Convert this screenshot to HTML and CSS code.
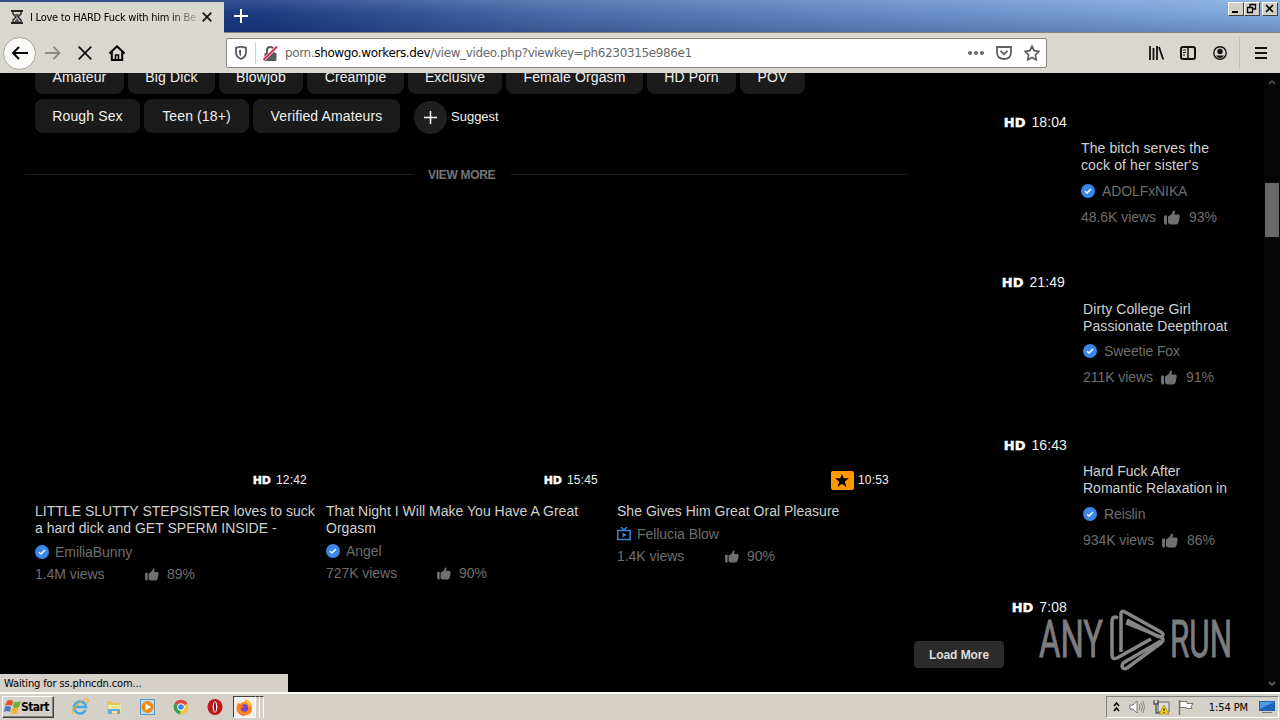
FILE: index.html
```html
<!DOCTYPE html>
<html lang="en">
<head>
<meta charset="utf-8">
<title>Browser window</title>
<link rel="stylesheet" href="styles.css">
</head>
<body>
<svg class="defs" width="0" height="0">
  <symbol id="thumb" viewBox="0 0 16 15"><path d="M0 6.500Q0 5.500 1 5.500H3v9H1.200Q0 14 0 12zM4 6.500 8 3.800 9 .8Q10.500 0 11 1.500L10.500 4.500H14.500Q16 5 15.700 7L14.500 12.500Q14 14.500 12 14.500H6L4 13z"/></symbol>
  <symbol id="check" viewBox="0 0 14 14"><circle cx="7" cy="7" r="7" fill="#3b86e8"/><path d="M4 7.300 6 9l4-4" fill="none" stroke="#fff" stroke-width="1.500"/></symbol>
</svg>
<div class="screen">
  <header class="titlebar">
    <div class="tab">
      <svg class="hourglass" width="12" height="14" viewBox="0 0 12 14"><path d="M0 1h12M0 13h12" stroke="#222" stroke-width="2"/><path d="M2 2v2l3 3-3 3v2M10 2v2L7 7l3 3v2" fill="none" stroke="#222" stroke-width="1.400"/><path d="M3.500 4h5L6 7zM6 8l3 4H3z" fill="#555"/></svg>
      <span class="tab-title">I Love to HARD Fuck with him in Be</span>
      <svg width="10" height="10" viewBox="0 0 10 10"><path d="m.7.7 8.600 8.600M9.300.7.700 9.300" stroke="#111" stroke-width="1.700"/></svg>
    </div>
    <svg class="newtab" width="14" height="14" viewBox="0 0 14 14"><path d="M7 0v14M0 7h14" stroke="#fff" stroke-width="2"/></svg>
    <div class="winbtns">
      <span class="wb"><svg width="13" height="11"><path d="M3 9h6" stroke="#000" stroke-width="2"/></svg></span>
      <span class="wb"><svg width="13" height="11"><path d="M5 4V1.500h5.500V6H8M2.500 4.500h5v5h-5zM5 1.500h6M2 4.500h6" fill="none" stroke="#000" stroke-width="1.300"/></svg></span>
      <span class="wb last"><svg width="13" height="11"><path d="m3 2 7 7m0-7-7 7" stroke="#000" stroke-width="1.600"/></svg></span>
    </div>
  </header>
  <nav class="toolbar">
    <span class="back"><svg width="18" height="16" viewBox="0 0 18 16"><path d="M17 8H2M8 2 2 8l6 6" fill="none" stroke="#000" stroke-width="2"/></svg></span>
    <svg class="fwd" width="16" height="14" viewBox="0 0 16 14"><path d="M0 7h14M8.500 1l6 6-6 6" fill="none" stroke="#8c8a86" stroke-width="1.800"/></svg>
    <svg class="stop" width="14" height="14" viewBox="0 0 14 14"><path d="m.7.7 12.600 12.600M13.300.7.700 13.300" stroke="#111" stroke-width="1.800"/></svg>
    <svg class="home" width="16" height="16" viewBox="0 0 16 16"><path d="M.5 8.500 8 1.300l7.500 7.200M2.800 7v8h10.400V7" fill="none" stroke="#000" stroke-width="2"/><path d="M6.500 15v-5h3v5" fill="none" stroke="#000" stroke-width="1.600"/></svg>
    <div class="urlbar">
      <svg class="shield" width="12" height="14" viewBox="0 0 12 14"><path d="M1 1.800Q6 0 11 1.800V6q0 5-5 7Q1 11 1 6z" fill="none" stroke="#5a5a5a" stroke-width="1.800"/><path d="M6 4v6.200Q4 9 4 6V4.300z" fill="#5a5a5a"/></svg>
      <i class="sep"></i>
      <svg class="lock" width="15" height="15" viewBox="0 0 15 15"><path d="M1.500 7h12v8h-12z" fill="#5a5a5a"/><path d="M4 7V4q0-3 3.300-3T10.500 4v3" fill="none" stroke="#5a5a5a" stroke-width="2"/><path d="M.5 14 14 .5" stroke="#fff" stroke-width="3.200"/><path d="M.5 14 14 .5" stroke="#e22850" stroke-width="2"/></svg>
      <span class="url"><span>porn.</span><b>showgo.workers.dev</b><span>/view_video.php?viewkey=ph6230315e986e1</span></span>
      <svg class="dots" width="16" height="4" viewBox="0 0 16 4"><g fill="#666"><circle cx="2" cy="2" r="2"/><circle cx="8" cy="2" r="2"/><circle cx="14" cy="2" r="2"/></g></svg>
      <svg class="pocket" width="16" height="14" viewBox="0 0 16 14"><path d="M1 1h14v5q0 7-7 7T1 6z" fill="none" stroke="#5f5f5f" stroke-width="1.800"/><path d="m4.500 4.800 3.500 3.400 3.500-3.400" fill="none" stroke="#5f5f5f" stroke-width="1.800"/></svg>
      <svg width="16" height="16" viewBox="0 0 16 16"><path d="m8 1.200 2.100 4.500 4.900.7-3.600 3.400.9 5L8 12.400l-4.300 2.400.9-5L1 6.400l4.900-.7z" fill="none" stroke="#5f5f5f" stroke-width="1.700"/></svg>
    </div>
    <svg class="lib" width="15" height="14" viewBox="0 0 15 14"><path d="M1 0v14M4.500 2v12M8 0v14M10 1l4.200 12.500" fill="none" stroke="#111" stroke-width="1.800"/></svg>
    <svg class="side" width="16" height="14" viewBox="0 0 16 14"><rect x="1" y="1" width="14" height="12" rx="2" fill="none" stroke="#111" stroke-width="2"/><path d="M8 1v12" stroke="#111" stroke-width="1.500"/><path d="M3 4h3M3 6.500h3M3 9h2" stroke="#111"/></svg>
    <svg class="acct" width="14" height="14" viewBox="0 0 14 14"><circle cx="7" cy="7" r="6.200" fill="none" stroke="#111" stroke-width="1.400"/><circle cx="7" cy="5.500" r="2.700" fill="#111"/><path d="M3 9.500h8Q10 12 7 12T3 9.500" fill="#111"/></svg>
    <i class="tsep"></i>
    <svg class="menu" width="12" height="12" viewBox="0 0 12 12"><path d="M0 1h12M0 6h12M0 11h12" stroke="#111" stroke-width="2"/></svg>
  </nav>
  <div class="page">
    <main>
      <div class="chips one"><span>Amateur</span><span>Big Dick</span><span>Blowjob</span><span>Creampie</span><span>Exclusive</span><span>Female Orgasm</span><span>HD Porn</span><span>POV</span></div>
      <div class="chips two"><span>Rough Sex</span><span>Teen (18+)</span><span>Verified Amateurs</span>
        <div class="suggest"><i><svg width="13" height="13"><path d="M6.500 0v13M0 6.500h13" stroke="#fff" stroke-width="1.500"/></svg></i>Suggest</div>
      </div>
      <div class="more"><b>VIEW MORE</b></div>
      <div class="cards">
        <article>
          <div class="dur"><b>HD</b>12:42</div>
          <h3>LITTLE SLUTTY STEPSISTER loves to suck<br>a hard dick and GET SPERM INSIDE -</h3>
          <div class="name"><svg><use href="#check"/></svg>EmiliaBunny</div>
          <div class="stats"><span>1.4M views</span><svg><use href="#thumb"/></svg>89%</div>
        </article>
        <article class="mid">
          <div class="dur"><b>HD</b>15:45</div>
          <h3>That Night I Will Make You Have A Great<br>Orgasm</h3>
          <div class="name"><svg><use href="#check"/></svg>Angel</div>
          <div class="stats"><span>727K views</span><svg><use href="#thumb"/></svg>90%</div>
        </article>
        <article class="end">
          <div class="dur"><i class="star"><svg width="14" height="13" viewBox="0 0 16 15"><path d="m8 0 2 5h6l-4.700 3.600L13 15l-5-3.800L3 15l1.700-6.400L0 5h6z"/></svg></i>10:53</div>
          <h3>She Gives Him Great Oral Pleasure</h3>
          <div class="name"><svg viewBox="0 0 14 14"><path d="M.8 3.500h12.400v9H.8zM4 0l3 3 3-3" fill="none" stroke="#3b82d0" stroke-width="1.500"/><path d="m5.500 5.500 4 2.500-4 2.500z" fill="#3b86d8"/></svg>Fellucia Blow</div>
          <div class="stats"><span>1.4K views</span><svg><use href="#thumb"/></svg>90%</div>
        </article>
      </div>
    </main>
    <aside>
      <article class="v1">
        <div class="dur"><b>HD</b>18:04</div>
        <h3>The bitch serves the<br>cock of her sister's</h3>
        <div class="name"><svg><use href="#check"/></svg>ADOLFxNIKA</div>
        <div class="stats">48.6K views<svg><use href="#thumb"/></svg>93%</div>
      </article>
      <article class="v2">
        <div class="dur"><b>HD</b>21:49</div>
        <h3>Dirty College Girl<br>Passionate Deepthroat</h3>
        <div class="name"><svg><use href="#check"/></svg>Sweetie Fox</div>
        <div class="stats">211K views<svg><use href="#thumb"/></svg>91%</div>
      </article>
      <article class="v3">
        <div class="dur"><b>HD</b>16:43</div>
        <h3>Hard Fuck After<br>Romantic Relaxation in</h3>
        <div class="name"><svg><use href="#check"/></svg>Reislin</div>
        <div class="stats">934K views<svg><use href="#thumb"/></svg>86%</div>
      </article>
      <article class="v4"><div class="dur"><b>HD</b>7:08</div></article>
      <button class="load">Load More</button>
    </aside>
    <div class="scroll">
      <svg width="8" height="5"><path d="m1 4 3-3 3 3" fill="none" stroke="#555" stroke-width="1.600"/></svg>
      <i></i>
      <svg width="8" height="5"><path d="m1 1 3 3 3-3" fill="none" stroke="#666" stroke-width="1.600"/></svg>
    </div>
    <div class="watermark">
      <svg width="194" height="64" viewBox="0 0 194 64">
        <g fill="#7d7d7d" stroke="#7d7d7d" stroke-width=".9" font-family="Roboto" font-size="52"><text x="0" y="48" textLength="64" lengthAdjust="spacingAndGlyphs">ANY</text><text x="131" y="48" textLength="62" lengthAdjust="spacingAndGlyphs">RUN</text></g>
        <g fill="none" stroke="#868686" stroke-width="3.500" stroke-linejoin="round"><path d="M79 9Q73 6 73 13V46q0 5 5 3L112 30"/><path d="M82 43V5q0-4 4-2l36 20q4 3 0 5l-4-1L88 11"/><path d="M87 14l35 14q4 3 0 6L88 59q-4 2-5-2l1-3 38-22"/></g>
      </svg>
    </div>
    <div class="status">Waiting for ss.phncdn.com...</div>
  </div>
  <footer class="taskbar">
    <div class="start"><svg width="17" height="16" viewBox="0 0 17 16"><path d="M3 2q3-2 6 0L8 7Q5 5 1 7z" fill="#e3502b"/><path d="M10 3q3 1 7-1l-2 6q-3 2-6 0z" fill="#6fae3e"/><path d="M1 8q3-2 6 0l-1 5q-3-2-6 0z" fill="#3f7dc8"/><path d="M8 9q3 1 7-1l-2 6q-3 2-6 0z" fill="#f3b62c"/></svg>Start</div>
    <div class="apps">
      <svg width="18" height="18" viewBox="0 0 18 18"><path d="M14.500 12A6 6 0 1 1 15 9H4.500" fill="none" stroke="#42a7e3" stroke-width="2.600"/><path d="M2 16Q-1 13 7 6t10-4q1 1-1 3" fill="none" stroke="#e6b43c" stroke-width="1.300"/></svg>
      <svg width="18" height="18" viewBox="0 0 18 18"><path d="M2 3h5l1 2h7v11H2z" fill="#e8c65a"/><path d="M3 7h13v8H3z" fill="#f7e6a0"/><path d="M3 16v-5h12v5h-3v-3H7v3z" fill="#61aedb"/></svg>
      <svg width="18" height="18" viewBox="0 0 18 18"><path d="M1.500 1.500h14v15h-14z" fill="#b9dcf2" stroke="#5c97c4"/><circle cx="8.500" cy="9" r="6" fill="#f58a13"/><path d="m6.500 5.500 5.500 3.500-5.500 3.500z" fill="#fff"/></svg>
      <svg width="16" height="16" viewBox="0 0 16 16"><path d="M8 8 1.500 4.500A7.500 7.500 0 0 1 14.500 4.500z" fill="#dd4439"/><path d="M8 8 1.500 4.500A7.500 7.500 0 0 0 7.500 15.500z" fill="#36a354"/><path d="M8 8l6.500-3.500a7.500 7.500 0 0 1-7 11z" fill="#f6c52d"/><circle cx="8" cy="8" r="3.700" fill="#fff"/><circle cx="8" cy="8" r="2.800" fill="#4283e8"/></svg>
      <svg width="16" height="16" viewBox="0 0 16 16"><ellipse cx="8" cy="8" rx="7.500" ry="8" fill="#c3161c"/><ellipse cx="8" cy="8" rx="2.300" ry="5.800" fill="#fff"/><ellipse cx="8" cy="8" rx="1" ry="5" fill="#8a1014"/></svg>
    </div>
    <div class="active"><svg width="17" height="17" viewBox="0 0 17 17"><path d="M2 4q1 0 2 1 2-2 4-2 2-1 2-3 5 3 6 7 1 9-7.500 9.500Q0 16 .5 9 .5 6 2 4" fill="#ff8420"/><path d="M10 0q5 3 6 7l-3 1Q13 4 9 3z" fill="#ffc82e"/><path d="M1 10q1 6 8 6.500Q3 18 1 10" fill="#ee3261"/><circle cx="8.500" cy="9" r="3.800" fill="#7546c9"/><path d="M3 6q3 0 5 2-2 2-4 1z" fill="#ff6a28"/></svg></div><i class="stack"></i><i class="stack"></i>
    <div class="tray">
      <svg width="7" height="10"><path d="m1 4 2.500-3L6 4M1 9l2.500-3L6 9" fill="none" stroke="#000" stroke-width="1.500"/></svg>
      <svg class="vol" width="16" height="14" viewBox="0 0 16 14"><path d="M1 5h3l4-4v12L4 9H1z" fill="#fff" stroke="#777"/><path d="M10 4q2 3 0 6M12 2.500q3 4.500 0 9M14 1q3 6 0 12" fill="none" stroke="#888"/></svg>
      <svg class="net" width="17" height="16" viewBox="0 0 17 16"><path d="M5 3h11v10H5z" fill="#ddd" stroke="#666"/><path d="M1 1v4h4V1M3 5v9h4" fill="none" stroke="#555" stroke-width="1.300"/><path d="m11 6 5 9H6z" fill="#f8d21c" stroke="#a88600" stroke-width=".7"/><path d="M11 9v3m0 1v1" stroke="#000"/></svg>
      <svg class="flag" width="17" height="15" viewBox="0 0 17 15"><path d="M1.500 0v15" stroke="#777" stroke-width="1.500"/><path d="M2 1.500h7v2h6l-2 3 1 2H8v-1H2z" fill="#fff" stroke="#777"/></svg>
      <time>1:54 PM</time>
      <svg width="16" height="14" viewBox="0 0 16 14"><path d="M0 1h16v10H0z" fill="#1e63b8"/><path d="M1 2h14L1 9z" fill="#4e9be2"/><path d="M3 12.500h10" stroke="#777"/></svg>
    </div>
  </footer>
</div>
</body>
</html>
```
FILE: styles.css
```css
* { box-sizing: border-box; }
body { margin: 0; background: #000; font-family: "Liberation Sans", Arial, sans-serif; overflow: hidden; }
svg { display: block; flex: none; }
.defs { position: absolute; }
.screen { width: 1280px; height: 720px; display: flex; flex-direction: column; overflow: hidden; }

.titlebar { height: 33px; flex: none; display: flex; align-items: flex-start; border-bottom: 1px solid #84847e;
  background: linear-gradient(to bottom, rgba(255,255,255,.12), transparent 40%, rgba(0,0,40,.18)), linear-gradient(to right, #17377e 0, #1d3b83 260px, #4769a8 540px, #6388c5 850px, #82aee0 1280px); }
.tab { width: 224px; height: 33px; margin-top: 2px; margin-bottom: -2px; background: #dad6d0; display: flex; align-items: center; padding: 0 12px 3px 11px; }
.tab-title { width: 166px; margin-left: 7px; margin-right: 6px; font: 11px "DejaVu Sans Condensed", "DejaVu Sans", sans-serif; letter-spacing: -.24px; white-space: nowrap; overflow: hidden; color: transparent; background: linear-gradient(to right, #000 140px, #dad6d0 172px); -webkit-background-clip: text; background-clip: text; }
.newtab { margin: 9px 0 0 10px; }
.winbtns { margin-left: auto; display: flex; padding: 2px 2px 0 0; }
.wb { width: 16px; height: 14px; background: #d4d0c8; border: 1px solid; border-color: #fff #404040 #404040 #fff; }
.wb.last { margin-left: 2px; }

.toolbar { height: 40px; flex: none; background: #dad6d0; display: flex; align-items: center; }
.back { width: 33px; height: 33px; margin-left: 3px; border: 1px solid #a4a19d; border-radius: 50%; background: #fafaf9; display: grid; place-items: center; }
.fwd { margin-left: 9px; }
.stop { margin-left: 17px; }
.home { margin-left: 17px; }
.urlbar { width: 821px; height: 30px; margin-left: 101px; padding: 0 6px 0 8px; border: 1px solid #888681; border-radius: 2px; background: #fff; display: flex; align-items: center; }
.sep { width: 1px; height: 22px; margin: 0 7px 0 8px; background: #ccc; }
.url { flex: 1; margin-left: 7px; font: 12px "DejaVu Sans", sans-serif; letter-spacing: -.37px; color: #686868; white-space: nowrap; }
.url b { font-weight: 400; color: #000; }
.pocket { margin: 0 12px; }
.lib { margin-left: 102px; }
.side { margin-left: 16px; }
.acct { margin-left: 17px; }
.tsep { width: 1px; height: 32px; margin-left: 12px; background: #c2beb8; }
.menu { margin-left: 15px; }

.page { flex: 1; min-height: 0; display: flex; position: relative; background: #000; overflow: hidden; }
main { width: 908px; padding-left: 25px; flex: none; margin-top: -13px; }
.chips { display: grid; grid-template-rows: 34px; gap: 4px; padding-left: 10px; height: 34px; color: #f0f0f0; font-size: 14px; letter-spacing: .12px; }
.chips > span { background: #1b1b1b; border-radius: 8px; text-align: center; line-height: 34px; white-space: nowrap; }
.one { grid-template-columns: 89px 87px 84px 97px 94px 137px 89px 65px; }
.two { grid-template-columns: 105px 105px 147px 110px; margin-top: 5px; }
.suggest { display: flex; align-items: center; margin-left: 10px; font-size: 13px; letter-spacing: 0; }
.suggest i { width: 33px; height: 33px; flex: none; margin-right: 4px; margin-bottom: -3px; border-radius: 50%; background: #1f1f1f; display: grid; place-items: center; }
.more { display: flex; align-items: center; margin-top: 33px; height: 17px; color: #757575; font-size: 12px; }
.more::before, .more::after { content: ""; height: 1px; background: #202020; }
.more::before { width: 389px; margin-right: 14px; }
.more::after { flex: 1; margin-left: 16px; }
.more b { letter-spacing: -.3px; }
.cards { display: grid; grid-template-columns: repeat(3, 282px); column-gap: 9px; margin: 287px 0 0 10px; }
h3 { margin: 0; color: #d0d0d0; font-weight: 400; font-size: 14px; line-height: 17px; letter-spacing: .02px; white-space: nowrap; }
.dur { display: flex; align-items: center; justify-content: flex-end; height: 20px; color: #f2f2f2; font-size: 12px; letter-spacing: .2px; }
.dur b { color: #fff; font: bold 11px "DejaVu Sans", sans-serif; letter-spacing: 0; margin-right: 5px; -webkit-text-stroke: .4px #fff; }
.cards .dur { padding-right: 10px; margin-bottom: 13px; }
.star { width: 23px; height: 19px; margin-right: 4px; border-radius: 2px; background: #ff9800; display: grid; place-items: center; }
.name, .stats { display: flex; align-items: center; color: #6e6e6e; font-size: 14px; letter-spacing: -.05px; white-space: nowrap; }
.name { height: 20px; margin-top: 5px; }
.name svg { width: 14px; height: 14px; margin-right: 6px; }
.stats { height: 20px; margin-top: 2px; }
.stats span { width: 110px; }
.stats svg { width: 14px; height: 13px; margin-right: 8px; fill: #707070; }
.mid .name { margin-top: 4px; }
.mid .stats span { width: 111px; }
.end .name { margin-top: 4px; }
.end .stats span { width: 108px; }

aside { width: 350px; margin-left: 6px; flex: none; display: flex; flex-direction: column; padding-top: 39px; }
aside article { height: 160px; flex: none; padding-left: 167px; }
aside .v2 { height: 163px; padding-left: 169px; }
aside .v3 { height: 162px; padding-left: 169px; }
aside .v4 { height: 44px; }
aside h3 { letter-spacing: .1px; }
aside .v3 h3 { letter-spacing: 0; }
aside .dur { width: 153px; margin-left: -167px; margin-bottom: 8px; font-size: 14px; letter-spacing: .1px; }
aside .v2 .dur { width: 151px; margin-left: -169px; margin-bottom: 9px; }
aside .v3 .dur { margin-left: -169px; }
aside .dur b { font-size: 13px; margin-right: 6px; }
aside .name { margin-top: 7px; letter-spacing: -.1px; }
aside .v2 .name { margin-top: 6px; }
aside .name svg { margin-right: 7px; }
aside .stats { margin-top: 6px; }
aside .stats svg { width: 16px; height: 15px; margin: 0 9px 0 8px; }
.load { width: 90px; height: 27px; flex: none; border: 0; border-radius: 4px; padding: 0; background: #2b2b2b; color: #ddd; font: bold 12px "Liberation Sans", Arial, sans-serif; letter-spacing: -.05px; }
.scroll { width: 16px; background: #050505; display: flex; flex-direction: column; align-items: center; padding: 7px 0 6px; }
.scroll i { width: 14px; height: 54px; margin-top: 98px; margin-bottom: auto; background: #686868; }
.watermark { position: absolute; left: 1039px; top: 536px; }
.status { position: absolute; left: 0; bottom: 0; width: 288px; height: 18px; padding-left: 4px; background: #d5d1ca; color: #000; font: 11px/20px "DejaVu Sans Condensed", "DejaVu Sans", sans-serif; letter-spacing: -.12px; }

.taskbar { height: 28px; flex: none; display: flex; align-items: center; background: #d5d0c8; border-top: 2px solid #fff; }
.start { width: 52px; height: 22px; margin-left: 2px; padding-left: 1px; display: flex; align-items: center; border: 1px solid; border-color: #fff #404040 #404040 #fff; box-shadow: inset -1px -1px #808080; font: bold 12px "DejaVu Sans Condensed", "DejaVu Sans", sans-serif; letter-spacing: -.6px; }
.apps { display: flex; align-items: center; gap: 16px; margin-left: 17px; }
.apps svg:nth-child(5) { margin-left: 2px; }
.active { width: 23px; height: 22px; margin-left: 10px; border: 1px solid; border-color: #404040 #fff #fff #404040; background: #f3f1ed; display: grid; place-items: center; }
.stack { width: 4px; height: 22px; border-top: 1px solid #404040; border-right: 1px solid #fff; }
.tray { width: 173px; height: 22px; margin-left: auto; margin-right: 1px; padding: 0 3px 0 6px; border: 1px solid; border-color: #808080 #fff #fff #808080; display: flex; align-items: center; }
.vol { margin-left: 9px; }
.net { margin-left: 8px; }
.flag { margin-left: 8px; }
.tray time { margin: 0 11px 0 auto; font: 11px "DejaVu Sans Condensed", "DejaVu Sans", sans-serif; letter-spacing: -.1px; white-space: nowrap; }
```
